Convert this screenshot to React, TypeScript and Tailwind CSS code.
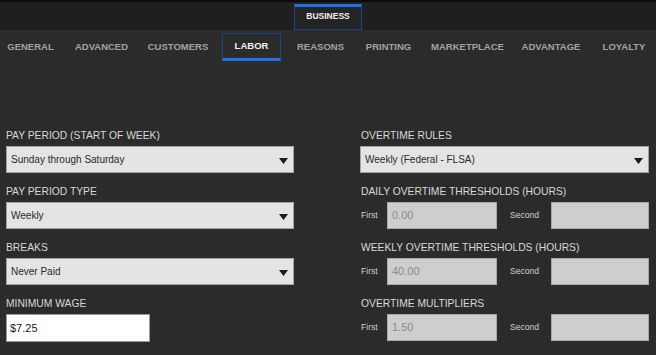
import React from "react";

const tabs: { name: string; w: number; ml?: number; active?: boolean }[] = [
  { name: "GENERAL", w: 61 },
  { name: "ADVANCED", w: 81 },
  { name: "CUSTOMERS", w: 72 },
  { name: "LABOR", w: 59, ml: 8, active: true },
  { name: "REASONS", w: 79 },
  { name: "PRINTING", w: 57 },
  { name: "MARKETPLACE", w: 101 },
  { name: "ADVANTAGE", w: 66 },
  { name: "LOYALTY", w: 80 },
];

function Arrow() {
  return (
    <svg width="9" height="6" viewBox="0 0 9 6" className="mr-[5px] mt-[2px] shrink-0">
      <polygon points="0,0 9,0 4.5,6" fill="#1a1a1a" />
    </svg>
  );
}

function Label({ children }: { children: React.ReactNode }) {
  return (
    <div className="h-[16px] mb-[2px] leading-[16px] text-[10.3px] text-[#d9d9d9] whitespace-nowrap">
      {children}
    </div>
  );
}

function Select({ value }: { value: string }) {
  return (
    <div className="h-[27px] flex items-center justify-between bg-[#e4e4e4] border border-[#a3a3a3] pl-[4px]">
      <span className="text-[10px] text-[#2a2a2a]">{value}</span>
      <Arrow />
    </div>
  );
}

function PairRow({ first }: { first: string }) {
  return (
    <div className="h-[27px] flex items-center">
      <span className="w-[27px] pl-[1px] text-[8.6px] text-[#cfcfcf]">First</span>
      <div className="w-[110px] h-[27px] bg-[#cecece] border border-[#a9a9a9] flex items-center pl-[4px] text-[11px] text-[#8a8a8a]">
        {first}
      </div>
      <span className="w-[54px] pl-[13px] text-[8.6px] text-[#cfcfcf]">Second</span>
      <div className="flex-1 h-[27px] bg-[#cecece] border border-[#a9a9a9]" />
    </div>
  );
}

export default function App() {
  return (
    <div className="w-[656px] h-[355px] overflow-hidden bg-[#2b2b2b] font-['Liberation_Sans',Arial,sans-serif]">
      {/* top bar */}
      <div className="h-[30px] bg-[#1f1f1f] border-t-[2px] border-[#0a0a0a] flex">
        <div className="ml-[294px] mt-[2px] w-[68px] h-[26px] bg-[#242424] border border-[#1d4680] border-t-[3px] border-t-[#2170e8] flex items-center justify-center pb-[3px]">
          <span className="text-[8.5px] font-bold text-[#f0f0f0]">BUSINESS</span>
        </div>
      </div>
      {/* tab bar */}
      <div className="h-[32px] flex items-start pt-[3px] overflow-hidden">
        {tabs.map((t) => (
          <div
            key={t.name}
            style={{ width: t.w, marginLeft: t.ml ?? 0 }}
            className={
              t.active
                ? "shrink-0 h-[28px] flex items-center justify-center border border-[#1d4680] border-b-[3px] border-b-[#2170e8]"
                : "shrink-0 h-[28px] flex items-center justify-center pt-[1px]"
            }
          >
            <span
              className={
                t.active
                  ? "text-[9.5px] font-bold text-[#f2f2f2] whitespace-nowrap"
                  : "text-[9.5px] font-bold text-[#a3a3a3] whitespace-nowrap"
              }
            >
              {t.name}
            </span>
          </div>
        ))}
      </div>
      {/* form */}
      <div className="pt-[66px] pl-[6px] grid grid-cols-[288px_289px] gap-x-[66px]">
        <div className="flex flex-col">
          <Label>PAY PERIOD (START OF WEEK)</Label>
          <Select value="Sunday through Saturday" />
          <div className="mt-[11px]">
            <Label>PAY PERIOD TYPE</Label>
            <Select value="Weekly" />
          </div>
          <div className="mt-[11px]">
            <Label>BREAKS</Label>
            <Select value="Never Paid" />
          </div>
          <div className="mt-[11px]">
            <Label>MINIMUM WAGE</Label>
            <div className="w-[144px] h-[28px] bg-white border border-[#9a9a9a] flex items-center pl-[3px] text-[11px] text-[#222]">
              $7.25
            </div>
          </div>
        </div>
        <div className="flex flex-col">
          <div className="pl-[1px]">
            <Label>OVERTIME RULES</Label>
          </div>
          <Select value="Weekly (Federal - FLSA)" />
          <div className="mt-[11px]">
            <div className="pl-[1px]">
              <Label>DAILY OVERTIME THRESHOLDS (HOURS)</Label>
            </div>
            <PairRow first="0.00" />
          </div>
          <div className="mt-[11px]">
            <div className="pl-[1px]">
              <Label>WEEKLY OVERTIME THRESHOLDS (HOURS)</Label>
            </div>
            <PairRow first="40.00" />
          </div>
          <div className="mt-[11px]">
            <div className="pl-[1px]">
              <Label>OVERTIME MULTIPLIERS</Label>
            </div>
            <PairRow first="1.50" />
          </div>
        </div>
      </div>
    </div>
  );
}
